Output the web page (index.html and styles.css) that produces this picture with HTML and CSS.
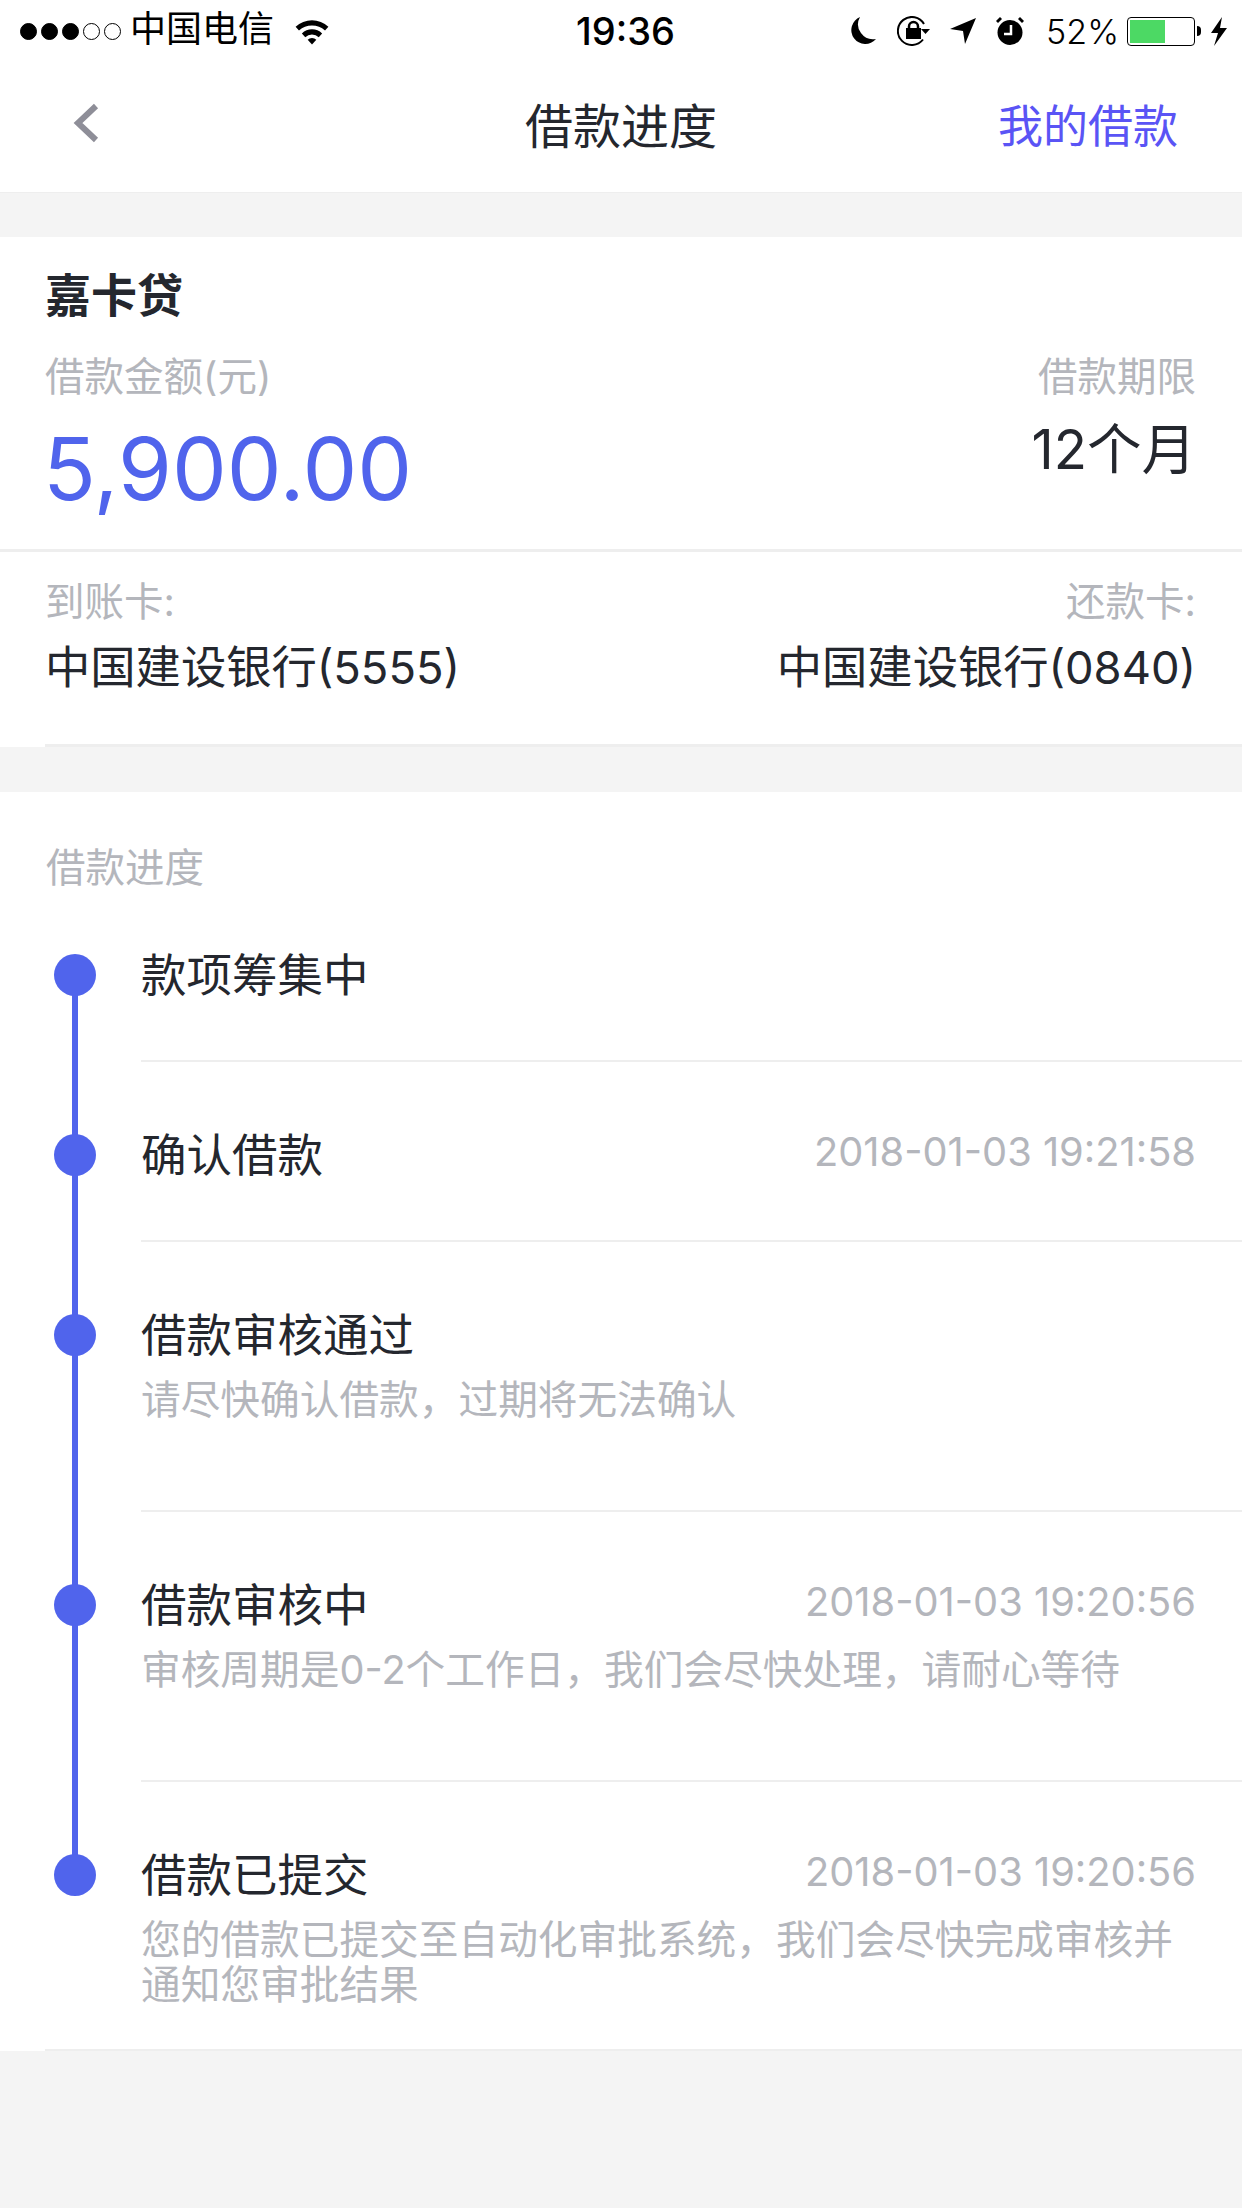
FILE: index.html

```html
<!DOCTYPE html>
<html>
<head>
  <meta charset="utf-8">
  <title>借款进度</title>
  <link rel="stylesheet" href="styles.css">
</head>
<body>
  <div class="statusBar">
    <div class="statusLeft">
      <div class="signal">
        <i class="on"></i><i class="on"></i><i class="on"></i><i></i><i></i>
      </div>
      <span class="carrier">中国电信</span>
      <svg class="wifi" width="36" height="27" viewBox="0 0 36 28">
        <path d="M1 9 A25 25 0 0 1 35 9 L31.500 13 A20 20 0 0 0 4.500 13 Z"/>
        <path d="M7.500 16 A15 15 0 0 1 28.500 16 L25 20 A10 10 0 0 0 11 20 Z"/>
        <path d="M13.500 22.500 A6.500 6.500 0 0 1 22.500 22.500 L18 27.500 Z"/>
      </svg>
    </div>
    <div class="clock">19:36</div>
    <div class="statusRight">
      <svg class="moon" width="26" height="28" viewBox="0 0 26 28">
        <path d="M10 0 A14 14 0 1 0 26 22 A15 15 0 0 1 10 0 Z"/>
      </svg>
      <svg class="lock" width="34" height="30" viewBox="0 0 34 30">
        <path d="M26 23.500 A14 14 0 1 1 27 8" fill="none" stroke="#000" stroke-width="2"/>
        <path d="M24 13 H33 L28.500 18 Z"/>
        <rect x="9" y="12" width="15" height="11"/>
        <path d="M12 13 V10.500 A4.500 4.500 0 0 1 21 10.500 V13" fill="none" stroke="#000" stroke-width="2.500"/>
      </svg>
      <svg class="arrow" width="26" height="26" viewBox="0 0 26 26">
        <path d="M0 11 L26 0 L15 26 L13 13 Z"/>
      </svg>
      <svg class="alarm" width="28" height="28" viewBox="0 0 28 28">
        <circle cx="14" cy="15.500" r="12.500"/>
        <path d="M0 4 L4 0 L6 2 L2 6 Z M28 4 L24 0 L22 2 L26 6 Z"/>
        <path d="M15 8 V17 H8" fill="none" stroke="#fff" stroke-width="2.500"/>
      </svg>
      <span class="percent">52%</span>
      <div class="battery"><div class="batteryFill" style="width: 57%"></div></div>
      <div class="batteryTip"></div>
      <svg class="bolt" width="16" height="29" viewBox="0 0 16 29">
        <path d="M11 0 L0 16 L7 16 L3 29 L16 11 L9 11 Z"/>
      </svg>
    </div>
  </div>

  <div class="navBar">
    <div class="navBack">
      <svg width="28" height="40" viewBox="0 0 28 40">
        <path d="M24 3 L6 20 L24 37" fill="none" stroke="#8e8e98" stroke-width="6"/>
      </svg>
    </div>
    <div class="navTitle">借款进度</div>
    <div class="navLink">我的借款</div>
  </div>

  <div class="loanCard">
    <div class="loanTop">
      <h1 class="loanName">嘉卡贷</h1>
      <div class="loanRow">
        <div>
          <div class="label">借款金额(元)</div>
          <div class="amount">5,900.00</div>
        </div>
        <div class="alignRight">
          <div class="label">借款期限</div>
          <div class="term">12个月</div>
        </div>
      </div>
    </div>
    <div class="loanBottom">
      <div>
        <div class="label">到账卡:</div>
        <div class="bank">中国建设银行(5555)</div>
      </div>
      <div class="alignRight">
        <div class="label">还款卡:</div>
        <div class="bank">中国建设银行(0840)</div>
      </div>
    </div>
  </div>

  <div class="progressCard">
    <div class="progressTitle">借款进度</div>

    <div class="step">
      <div class="stepRail"><div class="dot"></div></div>
      <div class="stepBody stepShort">
        <div class="stepHead"><span class="stepName">款项筹集中</span></div>
      </div>
    </div>

    <div class="step">
      <div class="stepRail"><div class="dot"></div></div>
      <div class="stepBody stepShort">
        <div class="stepHead">
          <span class="stepName">确认借款</span>
          <span class="stepTime">2018-01-03 19:21:58</span>
        </div>
      </div>
    </div>

    <div class="step">
      <div class="stepRail"><div class="dot"></div></div>
      <div class="stepBody stepTall">
        <div class="stepHead"><span class="stepName">借款审核通过</span></div>
        <div class="stepNote">请尽快确认借款，过期将无法确认</div>
      </div>
    </div>

    <div class="step">
      <div class="stepRail"><div class="dot"></div></div>
      <div class="stepBody stepTall">
        <div class="stepHead">
          <span class="stepName">借款审核中</span>
          <span class="stepTime">2018-01-03 19:20:56</span>
        </div>
        <div class="stepNote">审核周期是0-2个工作日，我们会尽快处理，请耐心等待</div>
      </div>
    </div>

    <div class="step stepLast">
      <div class="stepRail"><div class="dot"></div></div>
      <div class="stepBody">
        <div class="stepHead">
          <span class="stepName">借款已提交</span>
          <span class="stepTime">2018-01-03 19:20:56</span>
        </div>
        <div class="stepNote">您的借款已提交至自动化审批系统，我们会尽快完成审核并通知您审批结果</div>
      </div>
    </div>
    <div class="progressEnd"></div>
  </div>
</body>
</html>
```

FILE: styles.css

```css
html, body {
  margin: 0;
  height: 100%;
}
body {
  background-color: #f4f4f4;
  color: #24272e;
  font-family: "Inter", "Noto Sans CJK SC", sans-serif;
  overflow: hidden;
}
h1 {
  margin: 0;
}

/* status bar */
.statusBar {
  position: relative;
  display: flex;
  justify-content: space-between;
  align-items: center;
  height: 62px;
  padding: 0 15px 0 20px;
  background-color: #fff;
  color: #000;
}
.statusLeft, .statusRight {
  display: flex;
  align-items: center;
}
.signal {
  display: flex;
  gap: 4px;
}
.signal i {
  width: 17px;
  height: 17px;
  border: 1px solid #000;
  border-radius: 50%;
  box-sizing: border-box;
}
.signal i.on {
  background-color: #000;
}
.carrier {
  margin-left: 9px;
  font-size: 36px;
  line-height: 44px;
  margin-top: -4px;
}
.wifi {
  margin-left: 20px;
}
.clock {
  position: absolute;
  left: 576px;
  font-size: 38px;
  font-weight: 500;
}
.moon {
  margin-right: 21px;
}
.lock {
  margin-right: 19px;
}
.arrow {
  margin-right: 20px;
}
.alarm {
  margin-right: 22px;
}
.percent {
  font-size: 34px;
  font-weight: 300;
  margin-right: 8px;
}
.battery {
  width: 68px;
  height: 29px;
  padding: 2px;
  border: 1px solid #000;
  border-radius: 4px;
  box-sizing: border-box;
}
.batteryFill {
  height: 100%;
  background-color: #4cd964;
}
.batteryTip {
  width: 4px;
  height: 10px;
  margin-left: 2px;
  background-color: #000;
  border-radius: 0 4px 4px 0;
}
.bolt {
  margin-left: 10px;
}

/* nav */
.navBar {
  position: relative;
  display: flex;
  justify-content: space-between;
  align-items: center;
  height: 122px;
  padding: 0 64px 8px 72px;
  background-color: #fff;
  border-bottom: 1px solid #eee;
}
.navBack {
  display: flex;
}
.navTitle {
  position: absolute;
  left: 0;
  right: 0;
  text-align: center;
  font-size: 48px;
}
.navLink {
  font-size: 45px;
  color: #5a54f5;
}

/* loan card */
.loanCard {
  margin-top: 44px;
  background-color: #fff;
  height: 510px;
}
.loanTop {
  height: 315px;
  padding: 28px 46px 0 45px;
  border-bottom: 3px solid #eee;
  box-sizing: border-box;
}
.loanName {
  font-size: 46px;
  font-weight: bold;
  line-height: 60px;
}
.loanRow {
  display: flex;
  justify-content: space-between;
  margin-top: 24px;
}
.label {
  font-size: 39.500px;
  line-height: 56px;
  color: #b4b6bc;
}
.alignRight {
  text-align: right;
}
.amount {
  margin-top: 14px;
  margin-left: -2px;
  font-size: 87px;
  line-height: 100px;
  color: #5064ec;
}
.term {
  margin-top: 9px;
  font-size: 54.500px;
  line-height: 70px;
}
.loanBottom {
  display: flex;
  justify-content: space-between;
  height: 195px;
  margin-left: 45px;
  padding: 22px 46px 0 0;
  box-sizing: border-box;
  border-bottom: 3px solid #eee;
}
.bank {
  margin-top: 8px;
  font-size: 45.300px;
  line-height: 60px;
}

/* progress */
.progressCard {
  margin-top: 45px;
  background-color: #fff;
  padding-top: 48px;
}
.progressTitle {
  padding-left: 46px;
  margin-bottom: 58px;
  font-size: 39.500px;
  line-height: 56px;
  color: #b4b6bc;
}
.step {
  display: flex;
}
.stepRail {
  position: relative;
  width: 141px;
  flex: none;
}
.dot {
  position: absolute;
  left: 54px;
  top: 0;
  width: 42px;
  height: 42px;
  border-radius: 50%;
  background-color: #5064ec;
}
.step:not(.stepLast) .stepRail::after {
  content: "";
  position: absolute;
  left: 72px;
  top: 21px;
  width: 6px;
  height: 100%;
  background-color: #5064ec;
}
.stepBody {
  flex: 1;
  padding-right: 46px;
  box-sizing: border-box;
}
.stepShort, .stepTall {
  margin-bottom: 72px;
  border-bottom: 2px solid #eee;
}
.stepShort {
  height: 108px;
}
.stepTall {
  height: 198px;
}
.stepLast .stepBody {
  height: 195px;
}
.progressEnd {
  height: 2px;
  margin-left: 45px;
  background-color: #eee;
}
.stepHead {
  display: flex;
  justify-content: space-between;
  align-items: center;
  height: 42px;
  margin-top: -3px;
}
.stepName {
  font-size: 45.500px;
}
.stepTime {
  font-size: 39.800px;
  margin-top: -2px;
  color: #b4b6bc;
}
.stepNote {
  margin-top: 25px;
  font-size: 39.700px;
  line-height: 45px;
  color: #b4b6bc;
}
```
